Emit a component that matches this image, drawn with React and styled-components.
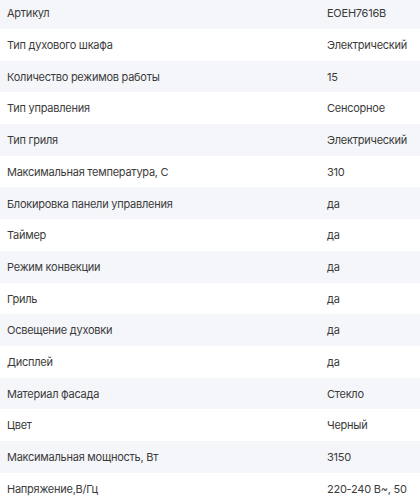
import React from "react";
import styled, { createGlobalStyle } from "styled-components";

const GlobalStyle = createGlobalStyle`
  html, body {
    margin: 0;
    padding: 0;
    background: #ffffff;
    overflow: hidden;
  }
`;

const SpecsTable = styled.div`
  display: flex;
  flex-direction: column;
  width: 420px;
  margin-top: -2.7px;
  font-family: Inter, "Noto Sans", sans-serif;
  font-size: 11px;
  letter-spacing: -0.25px;
  color: #3b3b3b;
`;

const Row = styled.div`
  display: grid;
  grid-template-columns: 320px 1fr;
  background: ${(props) => (props.shaded ? "#f5f6fa" : "#ffffff")};
`;

const Cell = styled.div`
  padding: 9.1px 7px 6.9px;
  line-height: 15.7px;
`;

const specs = [
  ["Артикул", "EOEH7616B"],
  ["Тип духового шкафа", "Электрический"],
  ["Количество режимов работы", "15"],
  ["Тип управления", "Сенсорное"],
  ["Тип гриля", "Электрический"],
  ["Максимальная температура, С", "310"],
  ["Блокировка панели управления", "да"],
  ["Таймер", "да"],
  ["Режим конвекции", "да"],
  ["Гриль", "да"],
  ["Освещение духовки", "да"],
  ["Дисплей", "да"],
  ["Материал фасада", "Стекло"],
  ["Цвет", "Черный"],
  ["Максимальная мощность, Вт", "3150"],
  ["Напряжение,В/Гц", "220-240 В~, 50 Гц"],
];

const App = () => (
  <>
    <GlobalStyle />
    <SpecsTable>
      {specs.map(([label, value], index) => (
        <Row key={label} shaded={index % 2 === 0}>
          <Cell>{label}</Cell>
          <Cell>{value}</Cell>
        </Row>
      ))}
    </SpecsTable>
  </>
);

export default App;
